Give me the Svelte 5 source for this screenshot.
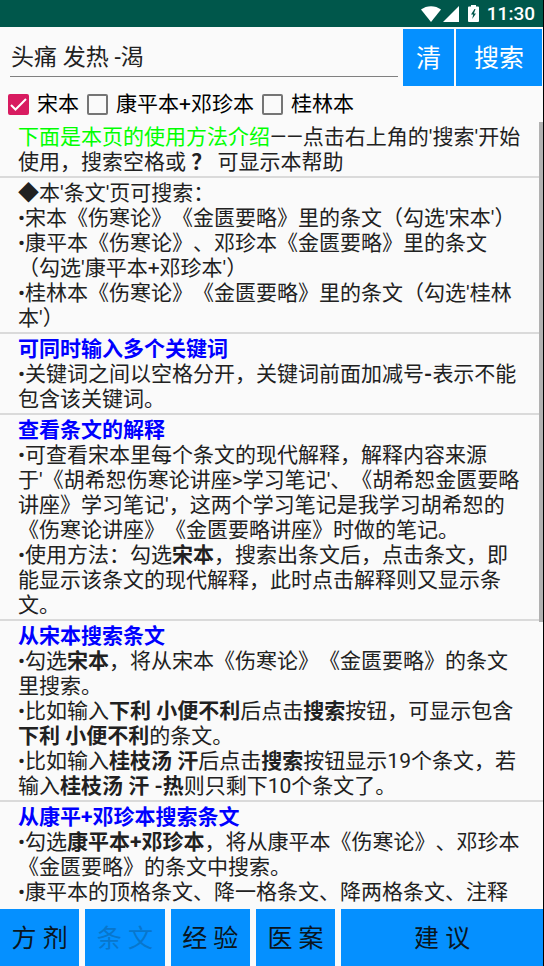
<script>
  let query = $state('头痛 发热 -渴');
  let books = $state([
    { name: '宋本', on: true },
    { name: '康平本+邓珍本', on: false },
    { name: '桂林本', on: false }
  ]);
  const tabs = ['方 剂', '条 文', '经 验', '医 案', '建 议'];
  let current = $state('条 文');

  function clearQuery() {
    query = '';
  }
</script>

<div class="app">
  <div class="status">
    <svg class="wifi" viewBox="0 0 20 16" aria-hidden="true"><path d="M0 3.6C5.6-.9 14.4-.9 20 3.6L10 16z" /></svg>
    <svg class="signal" viewBox="0 0 16 16" aria-hidden="true"><path d="M16 0v16H0z" /></svg>
    <svg class="battery" viewBox="0 0 11 17" aria-hidden="true">
      <path fill-rule="evenodd" d="M3 0h5v1.500H10a1 1 0 0 1 1 1V16a1 1 0 0 1-1 1H1a1 1 0 0 1-1-1V2.500a1 1 0 0 1 1-1h2zM6.500 4L3 9.500h2.200L4.200 14L8 8.500H5.900L7.500 4z" />
    </svg>
    <span class="clock">11:30</span>
  </div>

  <form class="search" onsubmit={(e) => e.preventDefault()}>
    <input class="query" type="text" aria-label="搜索" bind:value={query} />
    <button class="btn clear" type="button" onclick={clearQuery}>清</button>
    <button class="btn go" type="submit">搜索</button>
  </form>

  <div class="books">
    {#each books as book}
      <label><input type="checkbox" bind:checked={book.on} /><span>{book.name}</span></label>
    {/each}
  </div>

  <main>
    <section>
      <p><span class="intro">下面是本页的使用方法介绍</span>——点击右上角的'搜索'开始使用，搜索空格或<b>&nbsp;？</b> 可显示本帮助</p>
    </section>
    <section>
      <p>◆本'条文'页可搜索：</p>
      <p>•宋本《伤寒论》《金匮要略》里的条文（勾选'宋本'）</p>
      <p>•康平本《伤寒论》、邓珍本《金匮要略》里的条文（勾选'康平本+邓珍本'）</p>
      <p>•桂林本《伤寒论》《金匮要略》里的条文（勾选'桂林本'）</p>
    </section>
    <section>
      <h2>可同时输入多个关键词</h2>
      <p>•关键词之间以空格分开，关键词前面加减号<b>-</b>表示不能包含该关键词。</p>
    </section>
    <section>
      <h2>查看条文的解释</h2>
      <p>•可查看宋本里每个条文的现代解释，解释内容来源于'《胡希恕伤寒论讲座&gt;学习笔记'、《胡希恕金匮要略讲座》学习笔记'，这两个学习笔记是我学习胡希恕的《伤寒论讲座》《金匮要略讲座》时做的笔记。</p>
      <p>•使用方法：勾选<b>宋本</b>，搜索出条文后，点击条文，即能显示该条文的现代解释，此时点击解释则又显示条文。</p>
    </section>
    <section>
      <h2>从宋本搜索条文</h2>
      <p>•勾选<b>宋本</b>，将从宋本《伤寒论》《金匮要略》的条文里搜索。</p>
      <p>•比如输入<b>下利 小便不利</b>后点击<b>搜索</b>按钮，可显示包含<b>下利 小便不利</b>的条文。</p>
      <p>•比如输入<b>桂枝汤 汗</b>后点击<b>搜索</b>按钮显示19个条文，若输入<b>桂枝汤 汗 -热</b>则只剩下10个条文了。</p>
    </section>
    <section>
      <h2>从康平+邓珍本搜索条文</h2>
      <p>•勾选<b>康平本+邓珍本</b>，将从康平本《伤寒论》、邓珍本《金匮要略》的条文中搜索。</p>
      <p>•康平本的顶格条文、降一格条文、降两格条文、注释</p>
    </section>
    <div class="thumb"></div>
  </main>

  <nav>
    {#each tabs as tab}
      <button class="btn tab" disabled={tab === current} onclick={() => (current = tab)}>{tab}</button>
    {/each}
  </nav>
</div>

<style>
  :global(body) {
    margin: 0;
    background: #fafafa;
  }
  .app {
    box-sizing: border-box;
    height: 100vh;
    display: flex;
    flex-direction: column;
    border-right: 1px solid #000;
    background: #fafafa;
    color: #212121;
    font-family: Roboto, 'Noto Sans CJK SC', sans-serif;
    font-size: 21px;
    line-height: 25px;
    text-spacing-trim: space-all;
  }
  .status {
    flex: none;
    display: flex;
    align-items: center;
    justify-content: flex-end;
    height: 27px;
    padding-right: 8px;
    background: #00574b;
    color: #fff;
  }
  .status svg {
    fill: #fff;
  }
  .wifi {
    width: 20px;
    height: 16px;
    margin-right: 2px;
  }
  .signal {
    width: 16px;
    height: 16px;
    margin-right: 9px;
  }
  .battery {
    width: 11px;
    height: 17px;
    margin-right: 8px;
  }
  .clock {
    font-size: 19px;
    font-weight: 500;
  }
  .search {
    flex: none;
    display: flex;
    gap: 2px;
    padding: 2px 1px 0 10px;
  }
  .query {
    flex: 1;
    min-width: 0;
    height: 48px;
    box-sizing: border-box;
    margin-right: 3px;
    padding: 5px 0 0 1px;
    border: 0;
    border-bottom: 1px solid #808080;
    border-radius: 0;
    outline: 0;
    background: none;
    color: #212121;
    font: inherit;
    font-size: 23px;
  }
  .btn {
    height: 57px;
    padding: 2px 0 0;
    border: 0;
    background: #0590ff;
    font: inherit;
    font-size: 25px;
  }
  .clear,
  .go {
    flex: none;
    color: #fff;
  }
  .clear {
    width: 51px;
  }
  .go {
    width: 86px;
  }
  .books {
    flex: none;
    display: flex;
    gap: 8px;
    padding: 5px 8px 0;
    color: #000;
  }
  .books label {
    display: flex;
    align-items: center;
    gap: 8px;
    height: 26px;
  }
  .books input {
    appearance: none;
    box-sizing: border-box;
    width: 21px;
    height: 21px;
    margin: 0;
    border: 2px solid #757575;
    border-radius: 2px;
  }
  .books input:checked {
    border-color: #d81b60;
    background: #d81b60 url("data:image/svg+xml,%3Csvg xmlns='http://www.w3.org/2000/svg' viewBox='0 0 17 17'%3E%3Cpath d='M1 9l4.500 4.500L16 3' fill='none' stroke='white' stroke-width='2'/%3E%3C/svg%3E") center / 17px no-repeat;
  }
  main {
    flex: 1;
    min-height: 0;
    overflow: hidden;
    position: relative;
    margin-top: 5px;
  }
  section {
    padding: 3px 17px 1px 18px;
    border-bottom: 2px solid #dadada;
  }
  section:last-of-type {
    border-bottom: 0;
  }
  p,
  h2 {
    margin: 0;
    font-size: 21px;
    line-height: 25px;
  }
  h2 {
    color: #00f;
    font-weight: 700;
  }
  .intro {
    color: #0f0;
  }
  .thumb {
    position: absolute;
    top: 0;
    right: 0;
    width: 4px;
    height: 500px;
    background: #b1b1b1;
  }
  nav {
    flex: none;
    display: grid;
    grid-template-columns: repeat(4, 11fr) 28fr;
    gap: 6px;
  }
  .tab {
    color: #0a1520;
  }
  .tab:disabled {
    color: #0876cc;
  }
</style>
